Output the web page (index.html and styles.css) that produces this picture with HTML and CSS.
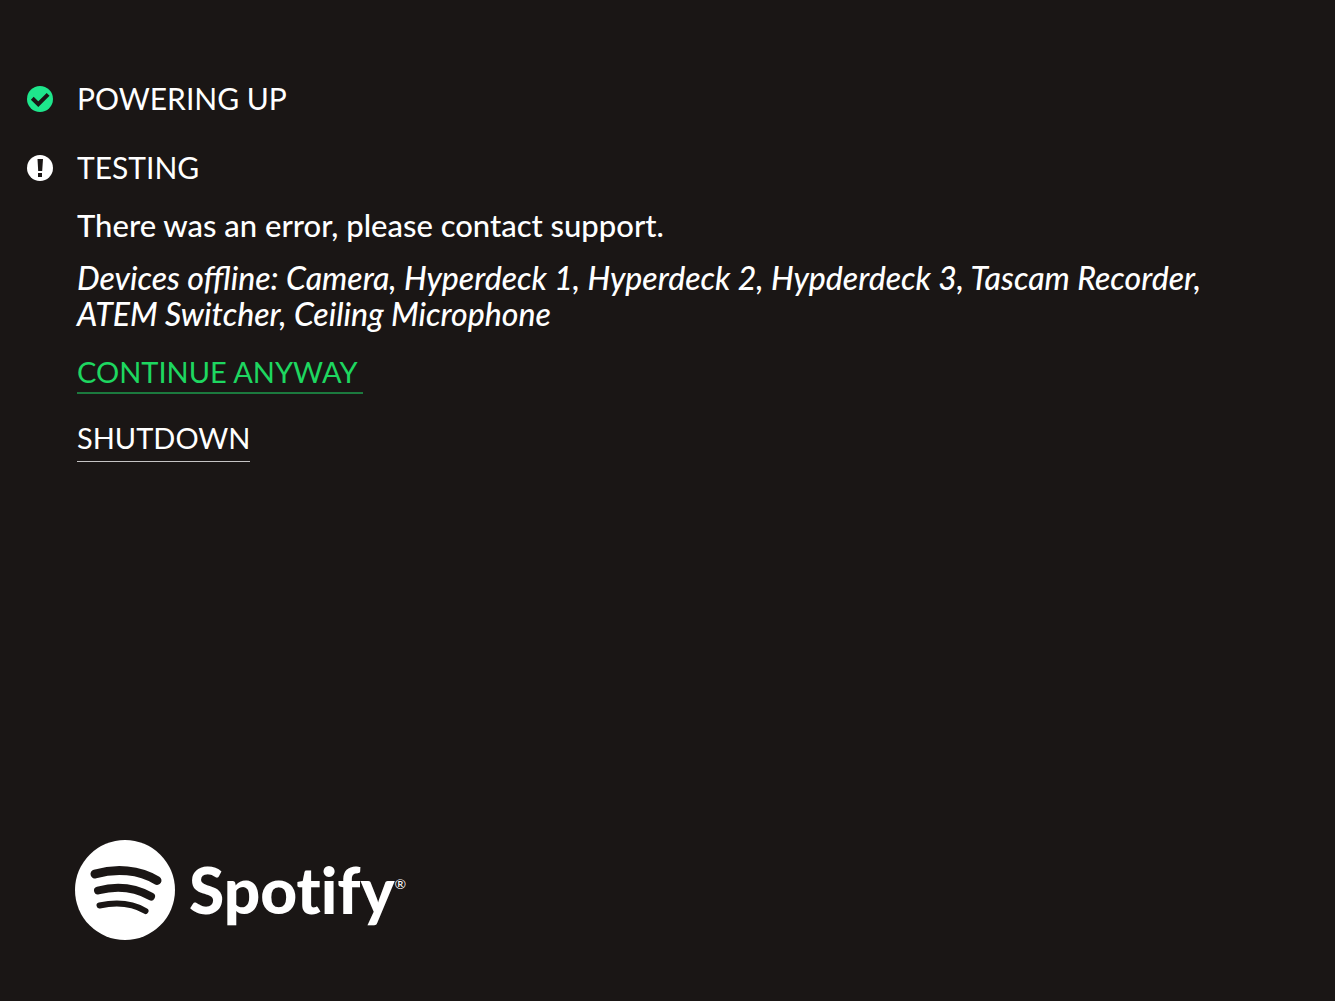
FILE: index.html
```
<!DOCTYPE html>
<html lang="en">
  <head>
    <meta charset="UTF-8" />
    <meta name="viewport" content="width=device-width, initial-scale=1.0" />
    <title>System Startup</title>
    <link rel="stylesheet" href="styles.css">
  </head>
  <body>
    <main>
      <ul class="steps">
        <li class="step">
          <svg class="icon icon-done" viewBox="0 0 26 26" aria-hidden="true">
            <circle cx="13" cy="13" r="13" />
            <path d="M5.300 12.300l6 5.900 9.800-9.800" />
          </svg>
          <h2>POWERING UP</h2>
        </li>
        <li class="step">
          <svg class="icon icon-error" viewBox="0 0 26 26" aria-hidden="true">
            <circle cx="13" cy="13" r="13" />
            <path d="M10.500 4h5.500l-.8 12h-4zM11 18h4v4h-4z" />
          </svg>
          <h2>TESTING</h2>
        </li>
      </ul>

      <div class="details">
        <p class="message">There was an error, please contact support.</p>
        <p class="devices">Devices offline: Camera, Hyperdeck 1, Hyperdeck 2, Hypderdeck 3, Tascam Recorder, ATEM Switcher, Ceiling Microphone</p>
        <button type="button" class="action continue">CONTINUE ANYWAY</button>
        <button type="button" class="action shutdown">SHUTDOWN</button>
      </div>
    </main>

    <footer class="brand">
      <svg class="brand-mark" viewBox="0 0 100 100" aria-hidden="true">
        <circle cx="50" cy="50" r="50" />
        <path stroke-width="9" d="M20 34C41 28 64 29.500 82 40.500" />
        <path stroke-width="8" d="M23 50.500C42 45.500 60 47.500 76 56.500" />
        <path stroke-width="6" d="M24.500 65.500C41 62 57 63 70.500 71" />
      </svg>
      <span class="brand-name">Spotify</span><span class="brand-reg">®</span>
    </footer>
  </body>
</html>
```
FILE: styles.css
```
body {
  font-family: Lato, sans-serif;
  font-size: 30px;
  line-height: 36px;
  background-color: #1a1615;
  color: #fff;
  margin: 0;
  min-height: 100vh;
  box-sizing: border-box;
  padding: 81px 76px 61px 27px;
  display: flex;
  flex-direction: column;
  justify-content: space-between;
}
h2,
p {
  margin: 0;
  font-size: inherit;
  font-weight: 400;
}
.steps {
  list-style: none;
  margin: 0;
  padding: 0;
  display: grid;
  gap: 33px;
}
.step {
  display: flex;
  align-items: center;
  gap: 24px;
}
.step h2 {
  line-height: 34px;
  padding-bottom: 2px;
}
.icon {
  width: 26px;
  height: 26px;
}
.icon-done circle {
  fill: #1ee68c;
}
.icon-done path {
  fill: none;
  stroke: #1a1615;
  stroke-width: 4;
}
.icon-error circle {
  fill: #fff;
}
.icon-error path {
  fill: #1a1615;
}
.details {
  display: flex;
  flex-direction: column;
  align-items: flex-start;
  margin-top: 21px;
  padding-left: 50px;
}
.message,
.devices {
  font-weight: 500;
}
.message {
  font-size: 31px;
}
.devices {
  font-size: 32px;
  font-style: italic;
  margin-top: 17px;
}
.action {
  font: inherit;
  font-size: 29px;
  color: #fff;
  background: none;
  border: 0;
  padding: 0;
  cursor: pointer;
}
.continue {
  color: #1ed760;
  border-bottom: 2px solid #1c7a3e;
  margin-top: 22px;
  padding: 0 5px 2px 0;
}
.shutdown {
  border-bottom: 1px solid #c6c4c4;
  margin-top: 26px;
  padding-bottom: 5px;
}
.brand {
  display: flex;
  align-items: center;
  padding-left: 48px;
}
.brand-mark {
  width: 100px;
  height: 100px;
  margin-right: 14px;
}
.brand-mark circle {
  fill: #fff;
}
.brand-mark path {
  fill: none;
  stroke: #1a1615;
  stroke-linecap: round;
}
.brand-name {
  font-size: 64px;
  font-weight: 900;
  font-variant-ligatures: none;
}
.brand-reg {
  font-size: 14px;
  padding-bottom: 12px;
}
```
